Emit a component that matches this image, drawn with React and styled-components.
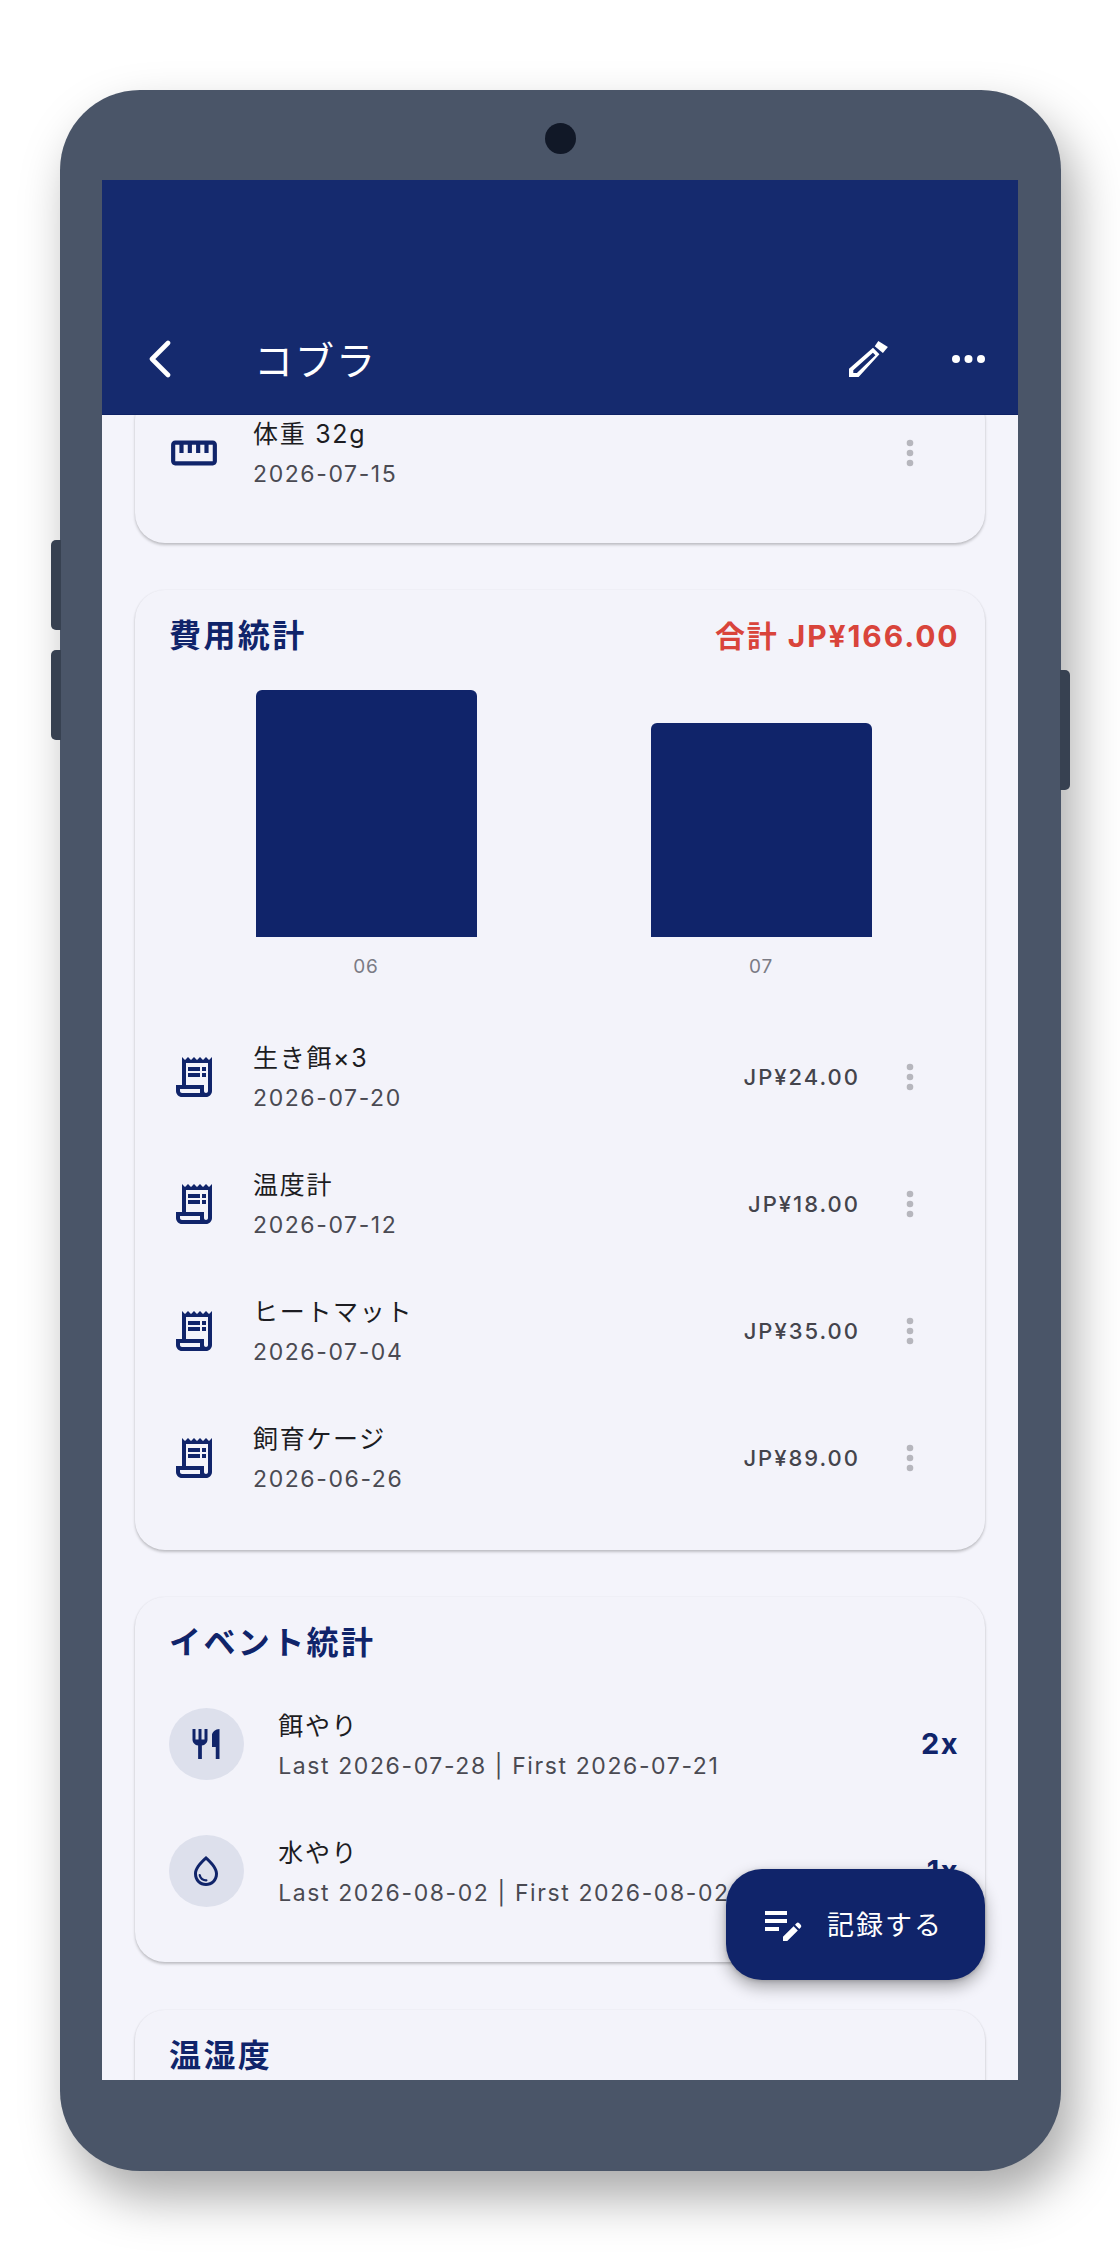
import React from "react";
import styled, { createGlobalStyle } from "styled-components";
import { MdOutlineReceiptLong, MdOutlineStraighten, MdRestaurant, MdOutlineWaterDrop, MdEditNote } from "react-icons/md";

const NAVY = "#10246a";
const HEAD = "#152a6e";

const Global = createGlobalStyle`
  html, body { margin: 0; padding: 0; background: #fff; }
  body { font-family: Inter, "Noto Sans CJK JP", sans-serif; }
  * { box-sizing: border-box; }
`;

const Page = styled.div`
  width: 1120px;
  height: 2260px;
  padding: 90px 60px;
  background: #fff;
  overflow: hidden;
`;

const Device = styled.div`
  position: relative;
  width: 1001px;
  height: 2081px;
  padding: 90px 43px 91px 42px;
  background: #4a5568;
  border-radius: 80px;
  box-shadow: 12px 26px 50px rgba(0, 0, 0, 0.34);
`;

const Camera = styled.div`
  position: absolute;
  left: 484.5px;
  top: 33px;
  width: 31px;
  height: 31px;
  border-radius: 50%;
  background: #111827;
`;

const SideButton = styled.div`
  position: absolute;
  top: ${(p) => p.$top}px;
  ${(p) => (p.$right ? "right: -9px;" : "left: -9px;")}
  width: 10px;
  height: ${(p) => p.$h}px;
  background: #374151;
  border-radius: ${(p) => (p.$right ? "0 5px 5px 0" : "5px 0 0 5px")};
`;

const Screen = styled.div`
  position: relative;
  width: 916px;
  height: 1900px;
  background: #f4f4fb;
  overflow: hidden;
  display: flex;
  flex-direction: column;
`;

const Header = styled.header`
  flex: none;
  height: 235px;
  background: ${HEAD};
  border-bottom: 1px solid #0e2164;
  display: flex;
  align-items: flex-end;
`;

const Toolbar = styled.div`
  flex: 1;
  height: 110px;
  display: flex;
  align-items: center;
  padding: 0 33px 0 46px;
  color: #fff;
`;

const BackIcon = styled.svg`
  flex: none;
  width: 23px;
  height: 38px;
`;

const PageTitle = styled.h1`
  flex: 1;
  margin: 3px 0 0 83px;
  font-size: 39px;
  line-height: 44px;
  font-weight: 400;
  letter-spacing: 2px;
`;

const EditIcon = styled.svg`
  flex: none;
  width: 39px;
  height: 37px;
  margin-right: 64px;
`;

const MoreIcon = styled.svg`
  flex: none;
  width: 33px;
  height: 8px;
`;

const Scroll = styled.main`
  flex: 1;
  min-height: 0;
  overflow: hidden;
  padding: 0 33px;
`;

const ScrollInner = styled.div`
  margin-top: -25.5px;
  display: flex;
  flex-direction: column;
  gap: 47px;
`;

const Card = styled.section`
  flex: none;
  background: #f3f3fa;
  border-radius: 30px;
  margin-top: ${(p) => p.$mt || 0}px;
  padding-bottom: ${(p) => p.$pb || 0}px;
  box-shadow: 0 2px 3px rgba(0, 0, 0, 0.22), 0 0 2px rgba(0, 0, 0, 0.06);
`;

const CardHead = styled.div`
  display: flex;
  justify-content: space-between;
  align-items: center;
  padding: 29px 25.5px 0 34px;
  height: 63px;
`;

const Heading = styled.h2`
  margin: 0;
  font-size: 32px;
  line-height: 34px;
  font-weight: 700;
  letter-spacing: 2.4px;
  color: ${NAVY};
`;

const Total = styled.div`
  font-size: 30px;
  line-height: 34px;
  font-weight: 700;
  letter-spacing: 1.9px;
  color: #d9443b;
`;

const Chart = styled.div`
  margin: 37px 0 0 33.5px;
  width: 790px;
  display: grid;
  grid-template-columns: 1fr 1fr;
`;

const ChartCol = styled.div`
  display: flex;
  flex-direction: column;
  align-items: center;
`;

const Plot = styled.div`
  height: 247px;
  display: flex;
  align-items: flex-end;
`;

const Bar = styled.div`
  width: 221px;
  height: ${(p) => p.$h}px;
  background: ${NAVY};
  border-radius: 6px 6px 0 0;
`;

const BarLabel = styled.div`
  margin-top: 19px;
  font-size: 19px;
  line-height: 22px;
  letter-spacing: 0.8px;
  color: #7b7b85;
`;

const List = styled.div`
  margin-top: ${(p) => p.$mt || 0}px;
`;

const Row = styled.div`
  height: 127px;
  display: flex;
  align-items: center;
  padding: 0 65.5px 0 34.5px;
`;

const LeadIcon = styled.span`
  flex: none;
  width: 48px;
  height: 48px;
  display: flex;
  align-items: center;
  justify-content: center;
  color: ${NAVY};
  svg { display: block; flex: none; }
`;

const RowText = styled.div`
  flex: 1;
  min-width: 0;
  margin-left: 35.5px;
`;

const RowTitle = styled.div`
  font-size: 25px;
  line-height: 34px;
  letter-spacing: 1.7px;
  color: #1c1c22;
`;

const RowSub = styled.div`
  margin-top: 8px;
  font-size: 23px;
  line-height: 30px;
  letter-spacing: 1.6px;
  color: #4a4a52;
`;

const Amount = styled.div`
  font-size: 22px;
  font-weight: 500;
  letter-spacing: 2px;
  color: #44444c;
  margin-right: 39.5px;
`;

const DotsIcon = styled.svg`
  flex: none;
  width: 20px;
  height: 28px;
`;

const EventRow = styled.div`
  height: 127px;
  display: flex;
  align-items: center;
  padding: 0 26px 0 33.7px;
`;

const IconCircle = styled.span`
  flex: none;
  width: 75px;
  height: 72px;
  border-radius: 50%;
  background: #dde0ec;
  color: ${NAVY};
  display: flex;
  align-items: center;
  justify-content: center;
  svg { display: block; flex: none; }
`;

const EventText = styled.div`
  flex: 1;
  min-width: 0;
  margin-left: 34.5px;
  padding-top: 3px;
`;

const Count = styled.div`
  font-size: 29px;
  font-weight: 700;
  letter-spacing: 1.5px;
  color: ${NAVY};
`;

const Fab = styled.button`
  position: absolute;
  right: 33px;
  bottom: 100px;
  width: 259px;
  height: 111px;
  padding: 0 0 3px 33px;
  border: 0;
  border-radius: 36px;
  background: ${NAVY};
  color: #fff;
  font-family: inherit;
  font-size: 27px;
  letter-spacing: 2px;
  display: flex;
  align-items: center;
  gap: 20px;
  box-shadow: 0 7px 16px rgba(0, 0, 0, 0.32), 0 1px 4px rgba(0, 0, 0, 0.16);
  svg { display: block; flex: none; }
`;

const Dots = () => (
  <DotsIcon viewBox="0 0 20 28">
    <circle cx="10" cy="4" r="3.3" fill="#b6b6bd" />
    <circle cx="10" cy="14" r="3.3" fill="#b6b6bd" />
    <circle cx="10" cy="24" r="3.3" fill="#b6b6bd" />
  </DotsIcon>
);

const expenses = [
  ["生き餌×3", "2026-07-20", "JP¥24.00"],
  ["温度計", "2026-07-12", "JP¥18.00"],
  ["ヒートマット", "2026-07-04", "JP¥35.00"],
  ["飼育ケージ", "2026-06-26", "JP¥89.00"],
];

export default function App() {
  return (
    <Page>
      <Global />
      <Device>
        <Camera />
        <SideButton $top={450} $h={90} />
        <SideButton $top={560} $h={90} />
        <SideButton $right $top={580} $h={120} />
        <Screen>
          <Header>
            <Toolbar>
              <BackIcon viewBox="0 0 23 38">
                <path d="M20 3 L4 19 L20 35" fill="none" stroke="#fff" strokeWidth="4.6" strokeLinecap="round" strokeLinejoin="round" />
              </BackIcon>
              <PageTitle>コブラ</PageTitle>
              <EditIcon viewBox="0 0 39 37">
                <path fill="#fff" d="M29.3 0 L38.9 6 L33.9 12 L25.7 5.3 Z" />
                <path fill="#fff" fillRule="evenodd" d="M0 36 L0 27.7 L24 6.7 L30.4 13.3 L9.6 36 Z M4.3 32 L7.9 32 L26.4 14.3 L23.9 11.7 L4.3 29.3 Z" />
              </EditIcon>
              <MoreIcon viewBox="0 0 33 8">
                <circle cx="4" cy="4" r="4" fill="#fff" />
                <circle cx="16.5" cy="4" r="4" fill="#fff" />
                <circle cx="29" cy="4" r="4" fill="#fff" />
              </MoreIcon>
            </Toolbar>
          </Header>
          <Scroll>
            <ScrollInner>
              <Card $pb={26.5}>
                <Row>
                  <LeadIcon><MdOutlineStraighten size={50} /></LeadIcon>
                  <RowText>
                    <RowTitle>体重 32g</RowTitle>
                    <RowSub>2026-07-15</RowSub>
                  </RowText>
                  <Dots />
                </Row>
              </Card>
              <Card $pb={28.5}>
                <CardHead>
                  <Heading>費用統計</Heading>
                  <Total>合計 JP¥166.00</Total>
                </CardHead>
                <Chart>
                  <ChartCol>
                    <Plot><Bar $h={247} /></Plot>
                    <BarLabel>06</BarLabel>
                  </ChartCol>
                  <ChartCol>
                    <Plot><Bar $h={214} /></Plot>
                    <BarLabel>07</BarLabel>
                  </ChartCol>
                </Chart>
                <List $mt={35.5}>
                  {expenses.map(([t, d, a]) => (
                    <Row key={t}>
                      <LeadIcon><MdOutlineReceiptLong size={48} /></LeadIcon>
                      <RowText>
                        <RowTitle>{t}</RowTitle>
                        <RowSub>{d}</RowSub>
                      </RowText>
                      <Amount>{a}</Amount>
                      <Dots />
                    </Row>
                  ))}
                </List>
              </Card>
              <Card $pb={28}>
                <CardHead>
                  <Heading>イベント統計</Heading>
                </CardHead>
                <List $mt={20}>
                  <EventRow>
                    <IconCircle><MdRestaurant size={36} /></IconCircle>
                    <EventText>
                      <RowTitle>餌やり</RowTitle>
                      <RowSub>Last 2026-07-28 | First 2026-07-21</RowSub>
                    </EventText>
                    <Count>2x</Count>
                  </EventRow>
                  <EventRow>
                    <IconCircle><MdOutlineWaterDrop size={36} /></IconCircle>
                    <EventText>
                      <RowTitle>水やり</RowTitle>
                      <RowSub>Last 2026-08-02 | First 2026-08-02</RowSub>
                    </EventText>
                    <Count>1x</Count>
                  </EventRow>
                </List>
              </Card>
              <Card $pb={300} $mt={1}>
                <CardHead>
                  <Heading>温湿度</Heading>
                </CardHead>
              </Card>
            </ScrollInner>
          </Scroll>
          <Fab>
            <MdEditNote size={48} />
            <span>記録する</span>
          </Fab>
        </Screen>
      </Device>
    </Page>
  );
}
